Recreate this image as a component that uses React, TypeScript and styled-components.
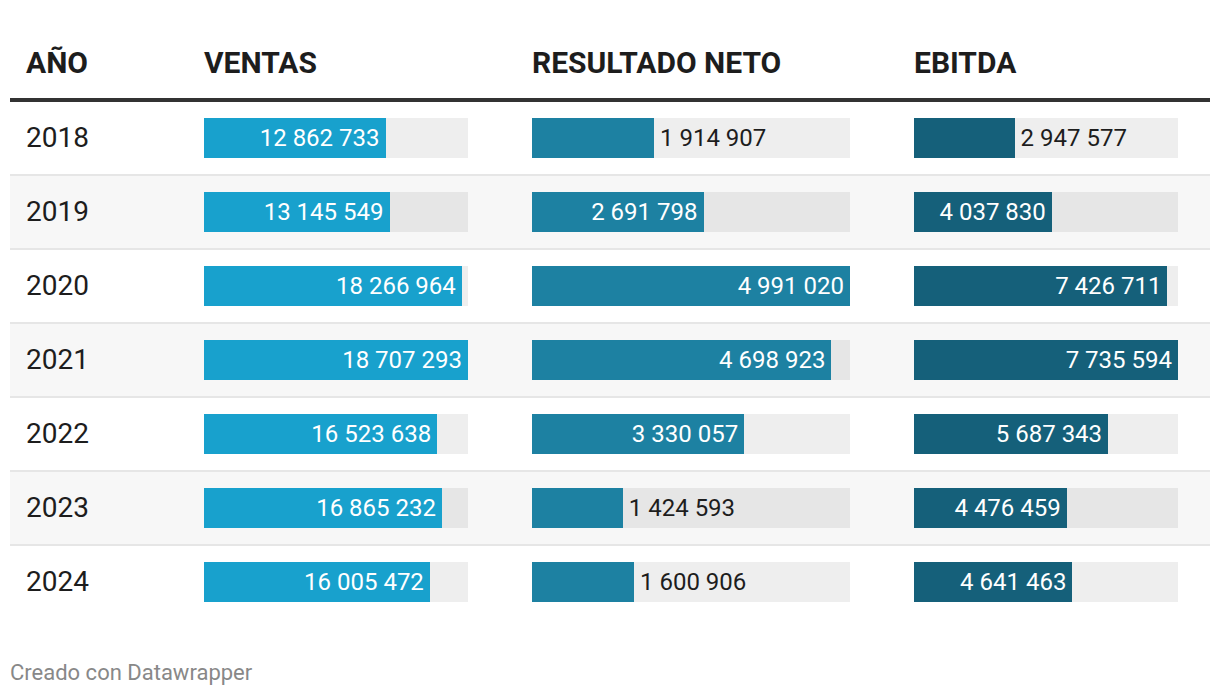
import React from 'react'
import styled, { createGlobalStyle } from 'styled-components'

const GlobalStyle = createGlobalStyle`
  html, body {
    margin: 0;
    padding: 0;
    background: #fff;
  }
  body {
    font-family: Roboto, 'Liberation Sans', sans-serif;
    color: #1d1d1d;
  }
`

interface Row {
  year: string
  ventas: number
  neto: number
  ebitda: number
}

const rows: Row[] = [
  { year: '2018', ventas: 12862733, neto: 1914907, ebitda: 2947577 },
  { year: '2019', ventas: 13145549, neto: 2691798, ebitda: 4037830 },
  { year: '2020', ventas: 18266964, neto: 4991020, ebitda: 7426711 },
  { year: '2021', ventas: 18707293, neto: 4698923, ebitda: 7735594 },
  { year: '2022', ventas: 16523638, neto: 3330057, ebitda: 5687343 },
  { year: '2023', ventas: 16865232, neto: 1424593, ebitda: 4476459 },
  { year: '2024', ventas: 16005472, neto: 1600906, ebitda: 4641463 },
]

const columns = [
  { key: 'ventas' as const, color: '#18a1cd', track: 264 },
  { key: 'neto' as const, color: '#1d81a2', track: 318 },
  { key: 'ebitda' as const, color: '#15607a', track: 264 },
]

const maxOf = (k: 'ventas' | 'neto' | 'ebitda') => Math.max(...rows.map((r) => r[k]))

const fmt = (n: number) => n.toString().replace(/\B(?=(\d{3})+(?!\d))/g, ' ')

const Page = styled.div`
  padding: 10px 10px 0 10px;
  width: 1200px;
`

const Grid = styled.div`
  display: grid;
  grid-template-columns: 162px 328px 382px 328px;
`

const HeadCell = styled.div<{ first?: boolean }>`
  height: 92px;
  box-sizing: border-box;
  display: flex;
  align-items: flex-end;
  padding: 0 32px 17px ${({ first }) => (first ? '16px' : '32px')};
  border-bottom: 4px solid #333333;
  font-size: 30px;
  font-weight: 700;
  line-height: 36px;
  color: #1d1d1d;
`

const Cell = styled.div<{ shaded: boolean; last: boolean; first?: boolean }>`
  height: 74px;
  box-sizing: border-box;
  display: flex;
  align-items: center;
  padding: 0 32px 0 ${({ first }) => (first ? '16px' : '32px')};
  background: ${({ shaded }) => (shaded ? '#f7f7f7' : '#ffffff')};
  border-bottom: 2px solid ${({ last }) => (last ? 'transparent' : '#e6e6e6')};
`

const Year = styled.span`
  font-size: 28px;
  line-height: 34px;
  color: #1d1d1d;
`

const Track = styled.div`
  position: relative;
  width: 100%;
  height: 40px;
  background: rgba(0, 0, 0, 0.065);
  display: flex;
  align-items: stretch;
`

const Bar = styled.div<{ color: string }>`
  background: ${({ color }) => color};
  display: flex;
  align-items: center;
  justify-content: flex-end;
  flex-shrink: 0;
`

const Label = styled.span<{ inside: boolean }>`
  font-size: 24px;
  line-height: 40px;
  white-space: nowrap;
  color: ${({ inside }) => (inside ? '#ffffff' : '#1d1d1d')};
  padding: 0 6px;
`

const Footer = styled.div`
  margin-top: 40px;
  font-size: 22px;
  line-height: 26px;
  color: #888888;
`

export default function App() {
  return (
    <>
      <GlobalStyle />
      <Page>
        <Grid>
          <HeadCell first>AÑO</HeadCell>
          <HeadCell>VENTAS</HeadCell>
          <HeadCell>RESULTADO NETO</HeadCell>
          <HeadCell>EBITDA</HeadCell>
          {rows.map((r, i) => {
            const shaded = i % 2 === 1
            const last = i === rows.length - 1
            return (
              <React.Fragment key={r.year}>
                <Cell first shaded={shaded} last={last}>
                  <Year>{r.year}</Year>
                </Cell>
                {columns.map((c) => {
                  const frac = r[c.key] / maxOf(c.key)
                  const inside = frac * c.track > 125
                  const label = <Label inside={inside}>{fmt(r[c.key])}</Label>
                  return (
                    <Cell key={c.key} shaded={shaded} last={last}>
                      <Track>
                        <Bar color={c.color} style={{ width: `${frac * 100}%` }}>
                          {inside && label}
                        </Bar>
                        {!inside && label}
                      </Track>
                    </Cell>
                  )
                })}
              </React.Fragment>
            )
          })}
        </Grid>
        <Footer>Creado con Datawrapper</Footer>
      </Page>
    </>
  )
}
